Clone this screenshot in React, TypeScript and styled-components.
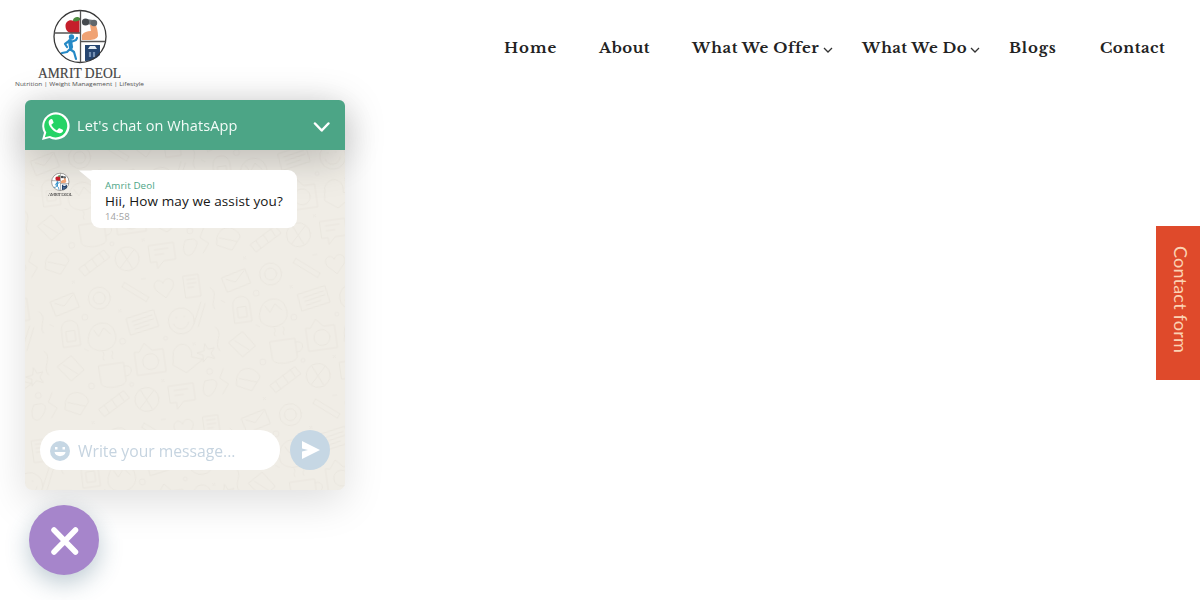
import React from "react";
import styled, { createGlobalStyle } from "styled-components";

const GlobalStyle = createGlobalStyle`
  * { box-sizing: border-box; }
  body { margin: 0; background: #fff; overflow: hidden; font-family: "Open Sans", "Noto Sans", sans-serif; }
`;

const Page = styled.div`
  min-height: 600px;
  background: #fff;
`;

const Header = styled.header`
  display: flex;
  justify-content: space-between;
  height: 95px;
  padding: 0 34px 0 14px;
`;

const LogoSvg = styled.svg`
  display: block;
  flex: none;
`;

const Nav = styled.nav`
  display: flex;
  align-items: center;
  height: 95px;
`;

const NavItem = styled.a<{ $width: number; $gap: number; $tracking: number }>`
  display: flex;
  align-items: center;
  justify-content: space-between;
  width: ${(p) => p.$width}px;
  margin-right: ${(p) => p.$gap}px;
  color: #222;
  font: bold 15px/24px "Libre Baskerville", "Liberation Serif", serif;
  letter-spacing: ${(p) => p.$tracking}px;
  white-space: nowrap;
  svg { flex: none; margin-top: 6px; }
`;

const Widget = styled.section`
  position: fixed;
  left: 25px;
  top: 100px;
  width: 320px;
  height: 390px;
  display: flex;
  flex-direction: column;
  border-radius: 7px;
  background: #f0ede6;
  box-shadow: 0 12px 40px rgba(0, 0, 0, 0.13);
`;

const ChatHeader = styled.div`
  position: relative;
  z-index: 1;
  display: flex;
  align-items: center;
  height: 50px;
  padding: 2px 15px 0 16px;
  border-radius: 6px 6px 0 0;
  background: #4ca586;
  box-shadow: 0 8px 40px rgba(0, 0, 0, 0.23);
`;

const ChatTitle = styled.div`
  flex: 1;
  margin-left: 7px;
  color: #f2fbf7;
  font-size: 14.5px;
  line-height: 20px;
  letter-spacing: 0.1px;
  white-space: nowrap;
`;

const ChatBody = styled.div`
  position: relative;
  flex: 1;
  display: flex;
  flex-direction: column;
  justify-content: space-between;
  padding: 20px 15px;
  border-radius: 0 0 7px 7px;
  overflow: hidden;
`;

const Wallpaper = styled.svg`
  position: absolute;
  inset: 0;
`;

const MessageRow = styled.div`
  position: relative;
  z-index: 2;
  display: flex;
  align-items: flex-start;
  padding-left: 7px;
`;

const Bubble = styled.div`
  position: relative;
  width: 206px;
  height: 58px;
  margin-left: 18px;
  padding: 9px 14px 0;
  border-radius: 2px 9px 9px 9px;
  background: #fff;
`;

const Tail = styled.svg`
  position: absolute;
  left: -12px;
  top: 0;
`;

const Sender = styled.div`
  color: #4ca586;
  font-size: 9.8px;
  line-height: 13px;
  letter-spacing: 0.1px;
`;

const MessageText = styled.div`
  color: #161616;
  font-size: 13.5px;
  line-height: 18px;
  letter-spacing: 0.1px;
  white-space: nowrap;
`;

const Time = styled.div`
  color: #a2a2a2;
  font-size: 9.5px;
  line-height: 13px;
  letter-spacing: 0.1px;
`;

const Composer = styled.div`
  position: relative;
  display: flex;
  gap: 10px;
`;

const Field = styled.div`
  display: flex;
  align-items: center;
  gap: 8px;
  width: 240px;
  height: 40px;
  padding: 2px 10px 0;
  border-radius: 20px;
  background: #fff;
  color: #c6d4e0;
  font-size: 15.7px;
  white-space: nowrap;
`;

const SendButton = styled.button`
  width: 40px;
  height: 40px;
  padding: 0;
  border: 0;
  border-radius: 50%;
  background: #c6d7e4;
  svg { display: block; }
`;

const CloseButton = styled.button`
  position: fixed;
  left: 29px;
  top: 505px;
  width: 70px;
  height: 70px;
  padding: 0;
  border: 0;
  border-radius: 50%;
  background: #a685cb;
  box-shadow: 0 8px 25px rgba(50, 90, 115, 0.33);
  svg { display: block; }
`;

const ContactTab = styled.div`
  position: fixed;
  right: 0;
  top: 226px;
  display: flex;
  align-items: center;
  width: 44px;
  height: 154px;
  padding: 20px 7px 20px 13px;
  background: #df4a2b;
  color: #fbd3b4;
  font: 18px/24px Lato, sans-serif;
  letter-spacing: 0.2px;
  writing-mode: vertical-rl;
  white-space: nowrap;
`;

const LogoMark = () => (
  <g>
    <circle cx="66" cy="36.500" r="26" fill="#fff" />
    <path d="M60 21c-5-2-8.500 1-8.500 5 0 5 4 8 8 7 3 1 6 0 6 0V20c-2-1-4 0-5.500 1Z" fill="#c51f2b" />
    <path d="M59 21c0-3 2-4 5-4l2 1v2c-2 1-4 2-7 1Z" fill="#4c8b3e" />
    <path d="M68 40v-5c2-3 5-4 9-4l-1-6 5-2c2 4 3 9 3 13-1 3-5 4-9 4Z" fill="#f0a374" />
    <path d="m72 21.500 7 1" stroke="#70777c" strokeWidth="5" />
    <circle cx="71.500" cy="22" r="3.600" fill="#44494e" /><circle cx="80" cy="23" r="3.200" fill="#60666b" />
    <circle cx="57.500" cy="37" r="2.700" fill="#2589c6" />
    <path d="m56 41 1 6" stroke="#2589c6" strokeWidth="4.200" strokeLinecap="round" />
    <path d="m55 41-4 3 2 3m4-5 5-2 1-2M57 48l-4 4-5 1m8-4 4 3 2 7" fill="none" stroke="#2589c6" strokeWidth="2.200" strokeLinecap="round" strokeLinejoin="round" />
    <path d="M71 45h15v10c-4 4-9 6-15 6Z" fill="#254570" />
    <path d="m74 49 2-3h5l2 3Z" fill="#e4edf4" />
    <path d="M76 52v5m4-5v5" stroke="#7590b2" strokeWidth="2.200" />
    <circle cx="66" cy="36.500" r="26" fill="none" stroke="#373737" strokeWidth="1.300" />
    <path d="M66.500 10.500v52M40 33h26.500M66.500 41.500h25" stroke="#555" strokeWidth="1.300" />
  </g>
);

const Logo = () => (
  <LogoSvg width="132" height="95" viewBox="0 0 132 95">
    <LogoMark />
    <text x="24" y="78" textLength="83" lengthAdjust="spacingAndGlyphs" fontFamily="Liberation Serif, serif" fontSize="14" fill="#444" stroke="#444" strokeWidth="0.150">AMRIT DEOL</text>
    <text x="1" y="85.500" textLength="129" lengthAdjust="spacingAndGlyphs" fontFamily="Open Sans, sans-serif" fontSize="6.100" fill="#555">Nutrition | Weight Management | Lifestyle</text>
  </LogoSvg>
);

const AvatarSvg = styled.svg`
  flex: none;
  display: block;
`;

const Avatar = () => (
  <AvatarSvg width="26" height="28" viewBox="22 0 87 94">
    <g transform="translate(-7.500 -1) scale(1.120)"><LogoMark /></g>
    <text x="25" y="86" textLength="82" fontFamily="Liberation Serif, serif" fontSize="16" fill="#333">AMRIT DEOL</text>
  </AvatarSvg>
);

const Chevron = () => (
  <svg width="10" height="7" viewBox="0 0 10 7" fill="none" stroke="#333" strokeWidth="1.300">
    <path d="m1 1 4 4 4-4" />
  </svg>
);

const Doodles = () => (
  <Wallpaper width="320" height="340">
    <defs>
      <pattern id="doodles" width="173" height="142" patternUnits="userSpaceOnUse" patternTransform="rotate(-8)">
        <g fill="none" stroke="#e5e1d9" strokeWidth="1" strokeLinecap="round" strokeLinejoin="round">
          <path d="m4 12 24-6 4 15-24 6ZM8 14l9 4 10-10" />
          <circle cx="53" cy="15" r="11" /><circle cx="53" cy="15" r="6" />
          <path d="m77 7 22 18m-19-22 22 18M77 7l3-4m19 22 3-4" />
          <path d="M118 9c-4-8-13 0-7 7l8 8 8-9c5-8-5-14-9-6Z" />
          <path d="M139 5h15v22h-15ZM142 9h9m-9 4h9m-9 4h6" />
          <path d="M11 42c0-12 17-12 17 0v17H11Zm4 2v10h9V44Z" />
          <path d="M38 49c4-12 22-12 25 0 5 15-10 22-20 17-7-3-9-9-5-17m5-3 4 7 6-8 6 7" />
          <path d="m77 39 28-5 3 17-29 5Zm5 4 21-4m-20 8 21-4m-20 8 15-3" />
          <circle cx="131" cy="49" r="13" /><path d="M123 51c2 8 13 8 15 0m-12-6h1m7 0h1" />
          <path d="m147 57 10-22m-14 19 10-21M2 77l15-9 11 16-14 9Zm6-1 13 11" />
          <path d="M43 82h25v18c0 7-25 7-25 0Zm25 4c9-2 9 10 0 10M49 77c-3-4 3-4 0-8m9 8c-3-4 3-4 0-8" />
          <path d="m85 74 6-8 7 8h11v23H80V74Z" /><circle cx="95" cy="85" r="8" />
          <path d="M119 78c8-13 21-2 17 8l11 4-18 11-12-9Z" />
          <path d="m151 75 3 6 6-1-4 5 3 6-7-3-5 5 1-7-6-3 7-1Z" />
          <path d="M5 113c6-14 22-7 23 3l-10 12-14-7Zm2 1 17 6" />
          <path d="m37 125 27-15 5 8-27 15Zm6-3 4 8m4-13 4 8m4-13 4 8" />
          <circle cx="86" cy="122" r="12" /><path d="m78 130 16-16m-13-2 9 20" />
          <path d="M109 112h25v17h-12l-7 7v-7h-6Zm5 5h14m-14 5h9M146 112c-7 12 0 20 7 12s6-15-7-12" />
          <path d="M164 20c9 7-3 15 2 22m-2 18c8 8-5 15 1 24m1 18-5 9 8 7-7 9" />
        </g>
        <g fill="none" stroke="#e7e3dc">
          <circle cx="36" cy="32" r="3" /><circle cx="70" cy="61" r="3" /><circle cx="113" cy="64" r="2" />
          <circle cx="33" cy="101" r="3" /><circle cx="73" cy="105" r="2" /><circle cx="152" cy="103" r="3" />
          <path d="m70 29 3 3m0-3-3 3M139 72l3 3m0-3-3 3M103 104l3 3m0-3-3 3M28 136l3 3m0-3-3 3M0 34l4 3M97 2h5M31 63l4 3" />
        </g>
      </pattern>
    </defs>
    <rect width="320" height="340" fill="url(#doodles)" opacity="0.600" />
  </Wallpaper>
);

const WhatsAppMark = () => (
  <svg width="29" height="30" viewBox="0 0 29 30">
    <path d="M1 29 3 21.800a13.700 13.700 0 1 1 5.400 5.300Z" fill="#fff" />
    <path d="m3.800 26.300 1.500-4.800a11.500 11.500 0 1 1 3.700 3.400Z" fill="#25d366" />
    <path transform="translate(4.700 4.800) scale(.84)" d="M6.620 10.790c1.440 2.830 3.760 5.140 6.590 6.590l2.200-2.200c.27-.27.67-.36 1.020-.24l3.300 1.400c.8.400 1 .8.900 1.400-.3 1.700-1.900 3-4 3C10.500 20.500 3.700 13.500 3.500 8c0-2.200 1.300-4 3-4.300.8-.1 1.200.1 1.500.8l1.300 3.100c.2.400.1.800-.2 1.100Z" fill="#fff" />
  </svg>
);

const links = [
  { label: "Home", width: 53, gap: 42, tracking: 1.1 },
  { label: "About", width: 51, gap: 42, tracking: 0.5 },
  { label: "What We Offer", width: 141, gap: 29, tracking: 0.5, menu: true },
  { label: "What We Do", width: 118, gap: 29, tracking: 0.4, menu: true },
  { label: "Blogs", width: 48, gap: 43, tracking: 0.9 },
  { label: "Contact", width: 66, gap: 0, tracking: 0.5 },
];

export default function App() {
  return (
    <Page>
      <GlobalStyle />
      <Header>
        <Logo />
        <Nav>
          {links.map((l) => (
            <NavItem key={l.label} $width={l.width} $gap={l.gap} $tracking={l.tracking}>
              {l.label}
              {l.menu && <Chevron />}
            </NavItem>
          ))}
        </Nav>
      </Header>
      <Widget>
        <ChatHeader>
          <WhatsAppMark />
          <ChatTitle>Let's chat on WhatsApp</ChatTitle>
          <svg width="17" height="12" viewBox="0 0 17 12" fill="none" stroke="#fff" strokeWidth="2.500" strokeLinecap="round" strokeLinejoin="round">
            <path d="m2 3.500 6.700 7 6.700-7" />
          </svg>
        </ChatHeader>
        <ChatBody>
          <Doodles />
          <MessageRow>
            <Avatar />
            <Bubble>
              <Tail width="16" height="14" viewBox="0 0 16 14"><path d="M0 .500h16V14h-4v-3.500Z" fill="#fff" /></Tail>
              <Sender>Amrit Deol</Sender>
              <MessageText>Hii, How may we assist you?</MessageText>
              <Time>14:58</Time>
            </Bubble>
          </MessageRow>
          <Composer>
            <Field>
              <svg width="20" height="20" viewBox="0 0 20 20">
                <circle cx="10" cy="10" r="10" fill="#c6d7e4" />
                <path d="M5 6h2.500v2.500H5Zm7.500 0H15v2.500h-2.500ZM4.500 11h11c-.5 5.500-10.500 5.500-11 0Z" fill="#fff" />
              </svg>
              Write your message...
            </Field>
            <SendButton aria-label="Send">
              <svg width="40" height="40" viewBox="0 0 40 40"><path d="m12 11 18 9-18 9V21.500l6-1.500-6-1.500Z" fill="#fff" /></svg>
            </SendButton>
          </Composer>
        </ChatBody>
      </Widget>
      <CloseButton aria-label="Close">
        <svg width="70" height="70" viewBox="0 0 70 70" stroke="#fff" strokeWidth="5.500" strokeLinecap="round"><path d="m25 25 21.500 22M46.500 25 25 47" /></svg>
      </CloseButton>
      <ContactTab>Contact form</ContactTab>
    </Page>
  );
}
